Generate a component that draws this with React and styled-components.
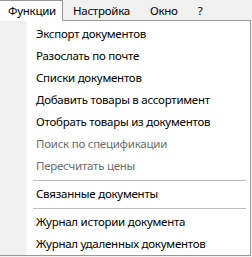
import styled, { createGlobalStyle } from 'styled-components';

const Global = createGlobalStyle`
  html, body {
    margin: 0;
    padding: 0;
    background: #f0f0f0;
  }
`;

const Screen = styled.div`
  position: relative;
  width: 252px;
  height: 257px;
  overflow: hidden;
  background: #f0f0f0;
  font-family: "Noto Sans", "Open Sans", sans-serif;
  font-size: 11.5px;
  letter-spacing: -0.25px;
  color: #000;
`;

const MenuBar = styled.ul`
  display: flex;
  height: 20px;
  margin: 0 0 0 -1px;
  padding: 0;
  list-style: none;
`;

const BarItem = styled.li`
  position: relative;
  z-index: 2;
  box-sizing: border-box;
  height: ${(p) => (p.$open ? '21px' : '20px')};
  padding: ${(p) => (p.$open ? '0 6px 0 8px' : '0 9px')};
  line-height: 19px;
  white-space: nowrap;
  background: ${(p) => (p.$open ? '#fff' : 'transparent')};
  border: ${(p) => (p.$open ? '1px solid #979797' : '1px solid transparent')};
  border-bottom: none;
`;

const Dropdown = styled.ul`
  box-sizing: border-box;
  width: 252px;
  margin: 0 0 0 -1px;
  padding: 2px 0 0;
  list-style: none;
  border: 1px solid #979797;
  background: linear-gradient(to right, #f1f1f1 0, #f1f1f1 26px, #fff 27px);
`;

const Item = styled.li`
  height: 22px;
  padding-left: 36px;
  line-height: 21px;
  white-space: nowrap;
  color: ${(p) => (p.$disabled ? '#6d6d6d' : '#000')};
`;

const Separator = styled.li`
  height: 6px;
  display: flex;
  align-items: center;
  padding: 0 4px 0 33px;

  &::after {
    content: '';
    flex: 1;
    height: 1px;
    background: #bcbcbc;
  }
`;

const topMenu = ['Функции', 'Настройка', 'Окно', '?'];

const entries = [
  { label: 'Экспорт документов' },
  { label: 'Разослать по почте' },
  { label: 'Списки документов' },
  { label: 'Добавить товары в ассортимент' },
  { label: 'Отобрать товары из документов' },
  { label: 'Поиск по спецификации', disabled: true },
  { label: 'Пересчитать цены', disabled: true },
  { sep: true },
  { label: 'Связанные документы' },
  { sep: true },
  { label: 'Журнал истории документа' },
  { label: 'Журнал удаленных документов' },
];

export default function App() {
  return (
    <Screen>
      <Global />
      <MenuBar>
        {topMenu.map((t, i) => (
          <BarItem key={t} $open={i === 0}>
            {t}
          </BarItem>
        ))}
      </MenuBar>
      <Dropdown>
        {entries.map((e, i) =>
          e.sep ? (
            <Separator key={i} />
          ) : (
            <Item key={i} $disabled={e.disabled}>
              {e.label}
            </Item>
          )
        )}
      </Dropdown>
    </Screen>
  );
}
